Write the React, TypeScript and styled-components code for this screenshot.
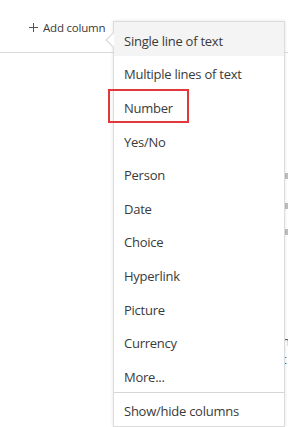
import React from 'react'
import styled, { createGlobalStyle } from 'styled-components'

const Global = createGlobalStyle`
  html, body {
    margin: 0;
    padding: 0;
    background: #fff;
  }
  body {
    font-family: 'Open Sans', 'Noto Sans', Arial, sans-serif;
    color: #323130;
  }
`

const Page = styled.div`
  position: relative;
  width: 288px;
  height: 427px;
  overflow: hidden;
  background: #fff;
`

const HeaderBar = styled.div`
  height: 53px;
  border-bottom: 1px solid #d9d9d9;
  display: flex;
  align-items: center;
  padding-left: 29px;
  padding-top: 2px;
  box-sizing: border-box;
`

const AddColumn = styled.div`
  display: flex;
  align-items: center;
  gap: 5px;
  font-size: 11.5px;
  letter-spacing: -0.2px;
  color: #3b3a39;
`

const Body = styled.div`
  display: flex;
  flex-direction: column;
  align-items: flex-start;
  padding-top: 120px;
  padding-left: 283px;
`

const Bar = styled.div<{ $gap: number }>`
  width: 6px;
  height: 6px;
  margin-top: ${(p) => p.$gap}px;
  background: #bdbdbd;
`

const Peek = styled.div<{ $gap: number }>`
  margin-top: ${(p) => p.$gap}px;
  margin-left: -1px;
  font-size: 13px;
  line-height: 18px;
  color: #555;
`

const Menu = styled.div`
  position: absolute;
  left: 113px;
  top: 21px;
  width: 170px;
  background: #fff;
  border: 1px solid #dcdcdc;
  box-shadow: 0 0 3px rgba(0, 0, 0, 0.12);
`

const Beak = styled.div`
  position: absolute;
  left: -6px;
  top: 12px;
  width: 11px;
  height: 11px;
  background: #fff;
  border-left: 1px solid #d4d4d4;
  border-bottom: 1px solid #d4d4d4;
  transform: rotate(45deg);
`

const Item = styled.div<{ $hover?: boolean }>`
  position: relative;
  height: 33.6px;
  display: flex;
  align-items: center;
  padding-left: 10px;
  padding-top: 4px;
  box-sizing: border-box;
  font-size: 13px;
  letter-spacing: -0.25px;
  color: #3a3a3a;
  background: ${(p) => (p.$hover ? '#f4f4f4' : 'transparent')};
  white-space: nowrap;
`

const Mark = styled.span`
  position: absolute;
  left: -6px;
  top: 0;
  width: 81px;
  height: 34px;
  border: 2px solid #e2373b;
  box-sizing: border-box;
`

const Divider = styled.div`
  height: 1px;
  background: #d6d6d6;
`

const types = [
  'Single line of text',
  'Multiple lines of text',
  'Number',
  'Yes/No',
  'Person',
  'Date',
  'Choice',
  'Hyperlink',
  'Picture',
  'Currency',
  'More...',
]

export default function App() {
  return (
    <Page>
      <Global />
      <HeaderBar>
        <AddColumn>
          <svg width="9" height="9" viewBox="0 0 9 9">
            <path d="M4.5 0v9M0 4.5h9" stroke="#555" strokeWidth="1" />
          </svg>
          <span>Add column</span>
        </AddColumn>
      </HeaderBar>
      <Body>
        <Bar $gap={0} />
        <Bar $gap={24} />
        <Bar $gap={20} />
        <Peek $gap={97}>n</Peek>
        <Peek $gap={0}>t</Peek>
      </Body>
      <Menu>
        <Beak />
        {types.map((t, i) => (
          <Item key={t} $hover={i === 0}>
            {t === 'Number' && <Mark />}
            {t}
          </Item>
        ))}
        <Divider />
        <Item>Show/hide columns</Item>
      </Menu>
    </Page>
  )
}
